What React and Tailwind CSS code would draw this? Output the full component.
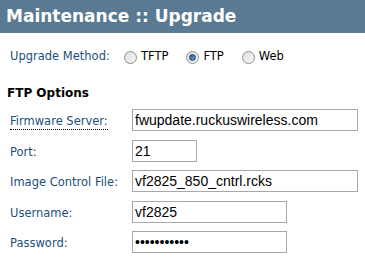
import React from 'react';

function Radio({ checked, label }) {
  return (
    <label className="flex items-center gap-[4px]">
      <span className="w-[13px] h-[13px] rounded-full border border-[#8f8f8f] bg-gradient-to-br from-[#dcdcdc] to-[#f8f8f8] flex items-center justify-center">
        {checked && <span className="w-[7px] h-[7px] rounded-full bg-gradient-to-br from-[#2b5f9a] to-[#5fa0dc] border border-[#1c3f6b]" />}
      </span>
      <span className="text-[11.5px] text-black">{label}</span>
    </label>
  );
}

function Row({ label, value, width, type = 'text', dotted }) {
  return (
    <div className="flex items-center h-[30.5px]">
      <div className="w-[122px] shrink-0">
        <span className={`text-[11.5px] text-[#1d4f7c] ${dotted ? 'border-b border-dotted border-black pb-[1px]' : ''}`}>{label}</span>
      </div>
      <input
        type={type}
        defaultValue={value}
        className={`${width} h-[22px] border border-[#a8a8a8] px-[2px] text-[14px] text-black outline-none`}
        style={{ fontFamily: '"Liberation Sans", Arial, sans-serif' }}
      />
    </div>
  );
}

export default function App() {
  return (
    <div className="w-[365px] h-[258px] bg-white overflow-hidden" style={{ fontFamily: '"DejaVu Sans", Tahoma, sans-serif' }}>
      <div className="h-[33px] bg-[#5a7a93] flex items-center pl-[6px]">
        <h1 className="text-[17px] font-bold text-white">Maintenance :: Upgrade</h1>
      </div>
      <div className="pl-[10px] pt-[15px]">
        <div className="flex items-center h-[18px]">
          <span className="w-[114px] text-[11.5px] text-[#1d4f7c]">Upgrade Method:</span>
          <div className="flex items-center gap-[18px]">
            <Radio label="TFTP" />
            <Radio label="FTP" checked />
            <Radio label="Web" />
          </div>
        </div>
        <h2 className="mt-[19px] ml-[-3px] text-[12px] font-bold text-black leading-[16px]">FTP Options</h2>
        <div className="mt-[4px]">
          <Row label="Firmware Server:" value="fwupdate.ruckuswireless.com" width="w-[226px]" dotted />
          <Row label="Port:" value="21" width="w-[65px]" />
          <Row label="Image Control File:" value="vf2825_850_cntrl.rcks" width="w-[226px]" />
          <Row label="Username:" value="vf2825" width="w-[155px]" />
          <Row label="Password:" value="password123" type="password" width="w-[155px]" />
        </div>
      </div>
    </div>
  );
}
